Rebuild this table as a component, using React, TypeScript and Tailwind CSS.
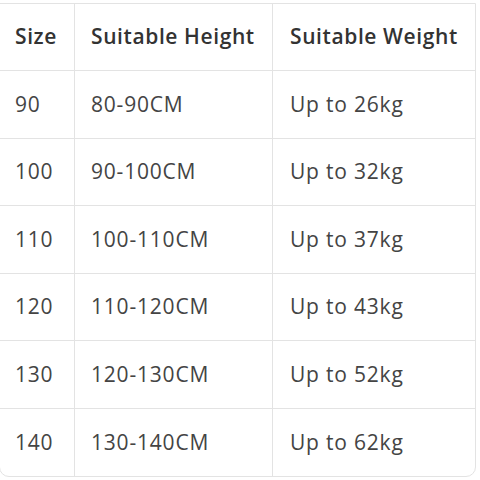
const rows = [
  { size: "90", height: "80-90CM", weight: "Up to 26kg" },
  { size: "100", height: "90-100CM", weight: "Up to 32kg" },
  { size: "110", height: "100-110CM", weight: "Up to 37kg" },
  { size: "120", height: "110-120CM", weight: "Up to 43kg" },
  { size: "130", height: "120-130CM", weight: "Up to 52kg" },
  { size: "140", height: "130-140CM", weight: "Up to 62kg" },
];

export default function App() {
  return (
    <div className="w-[480px] h-[480px] bg-white overflow-hidden pt-[3px] font-['Open_Sans',sans-serif]">
      <div className="ml-[-1px] w-[477px] border border-[#e3e3e3] rounded-b-[10px] overflow-hidden">
        {/* Header */}
        <div className="grid grid-cols-[74px_198px_1fr] h-[67px] border-b border-[#e3e3e3] text-[#333] font-semibold text-[21px] tracking-[0.6px]">
          <div className="flex items-center pl-[15px]">Size</div>
          <div className="flex items-center pl-[16px] border-l border-[#e3e3e3]">Suitable Height</div>
          <div className="flex items-center pl-[17px] border-l border-[#e3e3e3]">Suitable Weight</div>
        </div>
        {rows.map((r, i) => (
          <div
            key={r.size}
            className={`grid grid-cols-[74px_198px_1fr] h-[67.5px] text-[#444] text-[21px] tracking-[0.8px] ${
              i < rows.length - 1 ? "border-b border-[#e3e3e3]" : ""
            }`}
          >
            <div className="flex items-center pl-[15px]">{r.size}</div>
            <div className="flex items-center pl-[16px] border-l border-[#e3e3e3]">{r.height}</div>
            <div className="flex items-center pl-[17px] border-l border-[#e3e3e3]">{r.weight}</div>
          </div>
        ))}
      </div>
    </div>
  );
}
